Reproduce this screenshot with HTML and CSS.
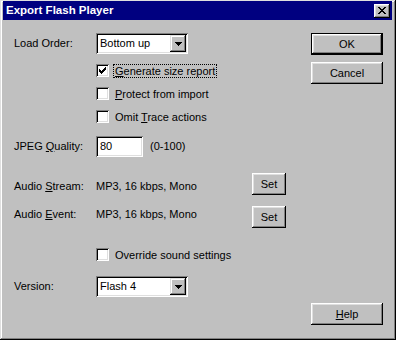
FILE: index.html
```html
<!DOCTYPE html>
<html lang="en">
<head>
    <meta charset="utf-8" />
    <title>Export Flash Player</title>
    <link rel="stylesheet" href="styles.css">
</head>
<body>
    <div class="dialog">
        <div class="titlebar">
            <span class="title">Export Flash Player</span>
            <span class="close">
                <svg width="8" height="7" viewBox="0 0 8 7"><path d="M0 0h2v1H0zM6 0h2v1H6zM1 1h2v1H1zM5 1h2v1H5zM2 2h4v1H2zM3 3h2v1H3zM2 4h4v1H2zM1 5h2v1H1zM5 5h2v1H5zM0 6h2v1H0zM6 6h2v1H6z"/></svg>
            </span>
        </div>
        <div class="content">
            <div class="form">
                <div class="fieldRow">
                    <span class="lbl">Load Order:</span>
                    <div class="combo">
                        <span class="comboText">Bottom up</span>
                        <span class="drop"><svg width="7" height="4" viewBox="0 0 7 4"><path d="M0 0h7v1H0zM1 1h5v1H1zM2 2h3v1H2zM3 3h1v1H3z"/></svg></span>
                    </div>
                </div>
                <div class="checks">
                    <div class="check">
                        <span class="cbox"><svg width="7" height="7" viewBox="0 0 7 7"><path d="M6 0h1v1H6zM5 1h2v1H5zM0 2h1v1H0zM4 2h3v1H4zM0 3h2v1H0zM3 3h3v1H3zM0 4h5v1H0zM1 5h3v1H1zM2 6h1v1H2z"/></svg></span>
                        <span class="cap focus"><u>G</u>enerate size report</span>
                    </div>
                    <div class="check">
                        <span class="cbox"></span>
                        <span class="cap"><u>P</u>rotect from import</span>
                    </div>
                    <div class="check">
                        <span class="cbox"></span>
                        <span class="cap">Omit <u>T</u>race actions</span>
                    </div>
                </div>
                <div class="fieldRow jpeg">
                    <span class="lbl">JPEG <u>Q</u>uality:</span>
                    <span class="num">80</span>
                    <span class="hint">(0-100)</span>
                </div>
                <div class="audio">
                    <div class="audioRow stream">
                        <span class="lbl">Audio <u>S</u>tream:</span>
                        <span class="val">MP3, 16 kbps, Mono</span>
                        <span class="btn set">Set</span>
                    </div>
                    <div class="audioRow event">
                        <span class="lbl">Audio <u>E</u>vent:</span>
                        <span class="val">MP3, 16 kbps, Mono</span>
                        <span class="btn set">Set</span>
                    </div>
                </div>
                <div class="check override">
                    <span class="cbox"></span>
                    <span class="cap">Override sound settings</span>
                </div>
                <div class="fieldRow version">
                    <span class="lbl">Version:</span>
                    <div class="combo">
                        <span class="comboText">Flash 4</span>
                        <span class="drop"><svg width="7" height="4" viewBox="0 0 7 4"><path d="M0 0h7v1H0zM1 1h5v1H1zM2 2h3v1H2zM3 3h1v1H3z"/></svg></span>
                    </div>
                </div>
            </div>
            <div class="side">
                <span class="btn default">OK</span>
                <span class="btn cancel">Cancel</span>
                <span class="btn help"><u>H</u>elp</span>
            </div>
        </div>
    </div>
</body>
</html>
```

FILE: styles.css
```css
html,body{margin:0;padding:0;}
body{font-family:"Liberation Sans",Arial,sans-serif;font-size:11px;line-height:13px;color:#000;background:#c0c0c0;}
svg{display:block;shape-rendering:crispEdges;}

.dialog{width:396px;height:340px;box-sizing:border-box;background:#c0c0c0;padding:1px 4px 3px 3px;display:flex;flex-direction:column;
    box-shadow:inset -1px -1px #000,inset 1px 1px #dfdfdf,inset -2px -2px #808080,inset 2px 2px #fff;}

/* title bar */
.titlebar{height:19px;flex:none;background:#000080;color:#fff;display:flex;align-items:center;justify-content:space-between;padding:0 2px 0 3px;}
.title{font-weight:bold;font-size:11.5px;}
.close{width:16px;height:14px;box-sizing:border-box;background:#c0c0c0;display:flex;align-items:center;justify-content:center;
    box-shadow:inset -1px -1px #000,inset 1px 1px #fff,inset -2px -2px #808080,inset 2px 2px #dfdfdf;}

.content{flex:1;display:flex;padding:13px 9px 12px 11px;}
.form{width:272px;}
.side{width:72px;margin-left:auto;display:flex;flex-direction:column;}

.lbl{width:82px;flex:none;}

/* combo + edit */
.fieldRow{display:flex;align-items:center;height:21px;}
.combo{width:92px;height:21px;box-sizing:border-box;background:#fff;display:flex;align-items:center;justify-content:space-between;padding:2px;
    box-shadow:inset 1px 1px #808080,inset -1px -1px #fff,inset 2px 2px #000,inset -2px -2px #dfdfdf;}
.comboText{padding-left:2px;}
.drop{width:16px;height:17px;box-sizing:border-box;background:#c0c0c0;display:flex;align-items:center;justify-content:center;padding-top:1px;
    box-shadow:inset -1px -1px #000,inset 1px 1px #dfdfdf,inset -2px -2px #808080,inset 2px 2px #fff;}
.num{width:47px;height:21px;box-sizing:border-box;background:#fff;padding:4px 0 0 4px;
    box-shadow:inset 1px 1px #808080,inset -1px -1px #fff,inset 2px 2px #000,inset -2px -2px #dfdfdf;}
.hint{margin-left:7px;}

/* checkboxes */
.checks{margin-top:5px;}
.check{display:flex;align-items:center;height:23px;margin-left:82px;}
.cbox{width:13px;height:13px;flex:none;box-sizing:border-box;background:#fff;padding:3px;
    box-shadow:inset 1px 1px #808080,inset -1px -1px #fff,inset 2px 2px #000,inset -2px -2px #dfdfdf;}
.cap{margin-left:4px;border:1px solid transparent;padding:0 1px;line-height:12px;}
.cap.focus{border:1px dotted #000;}

.jpeg{margin-top:8px;}

/* audio */
.audio{margin-top:16px;display:flex;flex-direction:column;gap:11px;}
.audioRow{display:flex;align-items:flex-start;height:22px;}
.audioRow .val{width:156px;flex:none;}
.stream .lbl,.stream .val{padding-top:7px;}
.event .lbl,.event .val{padding-top:2px;}

.override{margin-top:15px;}
.version{margin-top:10px;}

/* push buttons */
.btn{height:22px;box-sizing:border-box;background:#c0c0c0;display:flex;align-items:center;justify-content:center;
    box-shadow:inset -1px -1px #000,inset 1px 1px #fff,inset -2px -2px #808080,inset 2px 2px #dfdfdf;}
.btn.set{width:34px;}
.btn.default{border:1px solid #000;}
.btn.cancel{margin-top:7px;}
.btn.help{margin-top:auto;}
```
